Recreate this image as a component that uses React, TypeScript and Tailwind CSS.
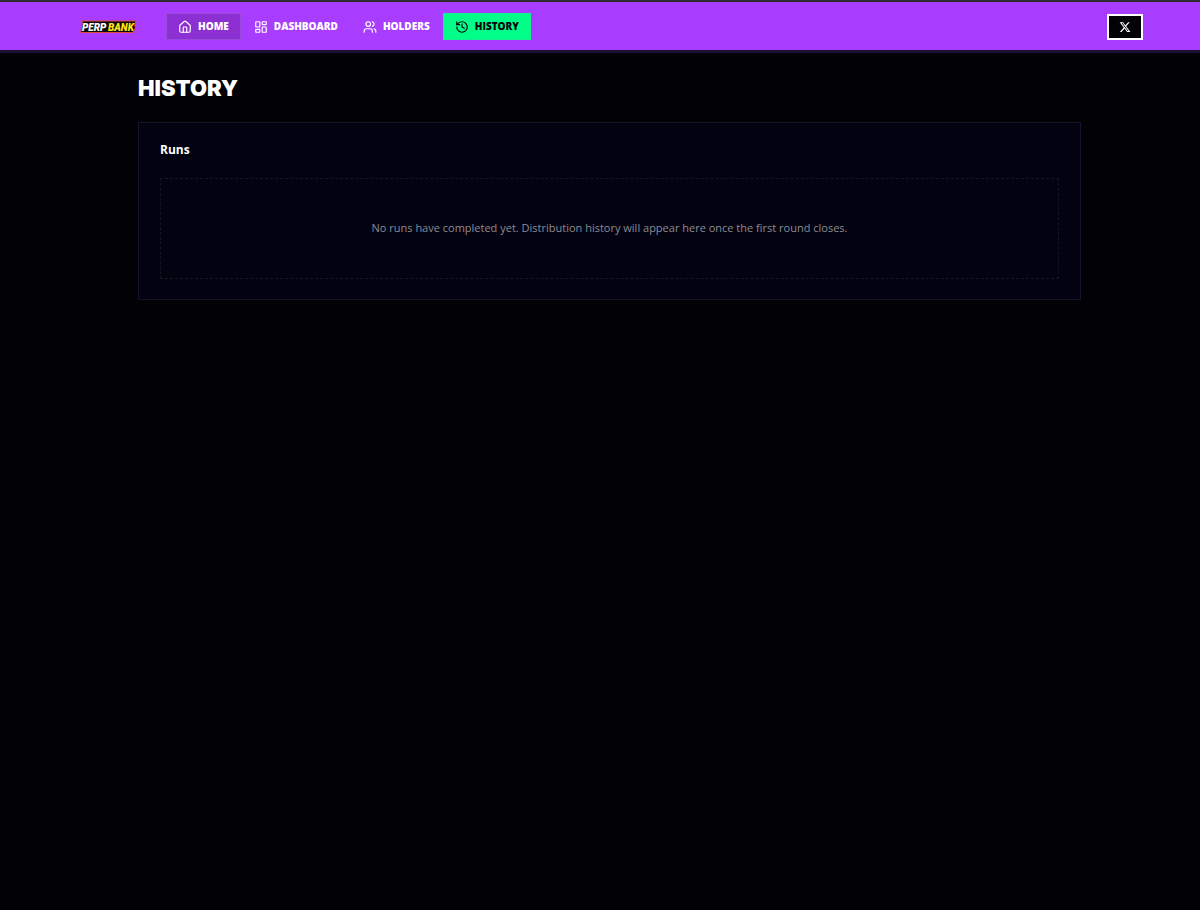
import { House, LayoutDashboard, Users, History } from "lucide-react";

const links = [
  { label: "HOME", icon: House, style: "border-[#984bd8] bg-[#8c30d3] text-white" },
  { label: "DASHBOARD", icon: LayoutDashboard, style: "border-transparent text-white" },
  { label: "HOLDERS", icon: Users, style: "border-transparent text-white" },
  { label: "HISTORY", icon: History, style: "border-[#18ec90] bg-[#00ff88] text-[#04040c]" },
];

function Logo() {
  return (
    <svg width="58" height="16" viewBox="0 0 58 16" role="img" aria-label="Perp Bank">
      <path d="M2.5 2H56L54.5 6.5L55.5 8.5L53 13.5H.8L1.5 8Z" fill="#08070c" stroke="#e34b35" strokeWidth="1" />
      <text x="2" y="11.5" fontFamily="Roboto, sans-serif" fontSize="10" fontWeight="900" fontStyle="italic" fill="#fff">PERP</text>
      <text x="28" y="11.5" fontFamily="Roboto, sans-serif" fontSize="10" fontWeight="900" fontStyle="italic" fill="#ffe512">BANK</text>
    </svg>
  );
}

export default function App() {
  return (
    <div className="min-h-screen bg-[#010106] font-['Open_Sans',sans-serif] text-white">
      <header className="flex items-center justify-between border-t-2 border-b-3 border-t-[#2d2a35] border-b-[#1b1236] bg-[#a83dff] pt-[11px] pr-[57px] pb-[10px] pl-20">
        <div className="flex items-center gap-7">
          <a href="#home" aria-label="Perp Bank"><Logo /></a>
          <nav className="flex gap-px">
            {links.map(({ label, icon: Icon, style }) => (
              <a key={label} href={`#${label.toLowerCase()}`} className={`flex h-[27px] items-center gap-[6px] border px-[11px] text-[10px] leading-4 font-extrabold ${style}`}>
                <Icon size={14} strokeWidth={2} />
                <span className="pb-px">{label}</span>
              </a>
            ))}
          </nav>
        </div>
        <a href="#x" aria-label="X" className="flex h-[26px] w-9 items-center justify-center border-2 border-white bg-[#020207]">
          <svg width="12" height="12" viewBox="0 0 24 24" fill="currentColor" aria-hidden="true">
            <path d="M18.244 2.25h3.308l-7.227 8.26 8.502 11.24H16.17l-5.214-6.817L4.99 21.75H1.68l7.73-8.835L1.254 2.25H8.08l4.713 6.231zm-1.161 17.52h1.833L7.084 4.126H5.117z" />
          </svg>
        </a>
      </header>
      <main className="pt-[21px] pr-[119px] pl-[138px]">
        <h1 className="font-['Inter',sans-serif] text-[22px] leading-7 font-black">HISTORY</h1>
        <section className="mt-5 border border-[#15132c] bg-[#030210] px-[21px] pt-[17px] pb-5">
          <h2 className="text-xs leading-5 font-bold">Runs</h2>
          <div className="mt-[18px] flex h-[101px] items-center justify-center border border-dashed border-[#17151f] pb-0.5">
            <p className="text-[11px] leading-4 text-[#8c8c96]">No runs have completed yet. Distribution history will appear here once the first round closes.</p>
          </div>
        </section>
      </main>
    </div>
  );
}
